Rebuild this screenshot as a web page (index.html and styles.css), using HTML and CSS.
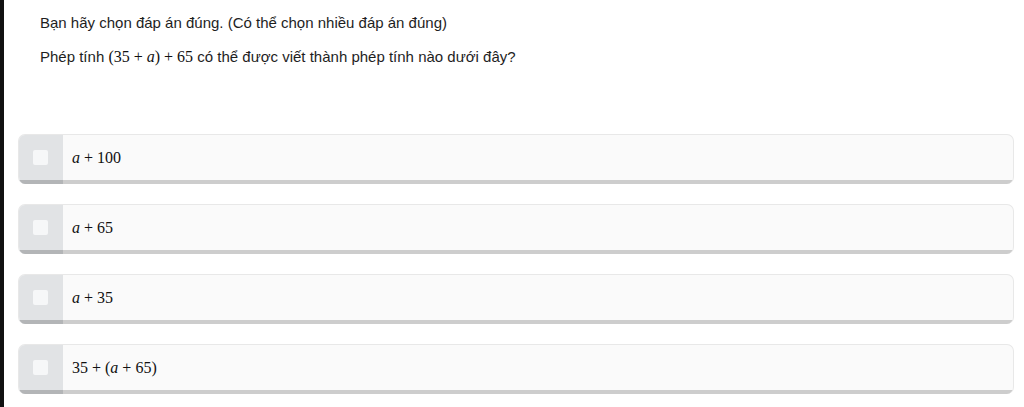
FILE: index.html
```html
<!DOCTYPE html>
<html lang="vi">
<head>
<meta charset="utf-8">
<title>Câu hỏi</title>
<link rel="stylesheet" href="styles.css">
</head>
<body>
<div class="page">
  <div class="question">
    <p class="instr">Bạn hãy chọn đáp án đúng. (Có thể chọn nhiều đáp án đúng)</p>
    <p class="prompt">Phép tính <span class="math">(35 + <i>a</i>) + 65</span> có thể được viết thành phép tính nào dưới đây?</p>
  </div>
  <div class="options">
    <div class="option">
      <div class="check"><span class="box"></span></div>
      <div class="label"><span class="math"><i>a</i> + 100</span></div>
    </div>
    <div class="option">
      <div class="check"><span class="box"></span></div>
      <div class="label"><span class="math"><i>a</i> + 65</span></div>
    </div>
    <div class="option">
      <div class="check"><span class="box"></span></div>
      <div class="label"><span class="math"><i>a</i> + 35</span></div>
    </div>
    <div class="option">
      <div class="check"><span class="box"></span></div>
      <div class="label"><span class="math">35 + (<i>a</i> + 65)</span></div>
    </div>
  </div>
</div>
</body>
</html>
```
FILE: styles.css
```css
html, body {
  margin: 0;
  padding: 0;
  background: #ffffff;
}
body {
  font-family: "Liberation Sans", Arial, sans-serif;
  color: #1e1e1e;
}
.page {
  min-height: 407px;
  box-sizing: border-box;
  border-left: 4px solid #111;
  padding: 13px 10px 0 14px;
}
.question {
  padding-left: 22px;
}
.question p {
  margin: 0;
  font-size: 15px;
  line-height: 20px;
}
.question .prompt {
  margin-top: 14px;
}
.math {
  font-family: "Liberation Serif", "Times New Roman", serif;
  font-size: 16px;
  color: #111;
}
.math i {
  font-style: italic;
}
.options {
  margin-top: 67px;
  display: flex;
  flex-direction: column;
  gap: 20px;
}
.option {
  display: flex;
  height: 50px;
  box-sizing: border-box;
  border-radius: 7px;
  border: 1px solid #e8e8e8;
  border-bottom: none;
  background: #fafafa;
  overflow: hidden;
}
.check {
  width: 44px;
  flex: none;
  background: #e1e3e5;
  border-bottom: 4px solid #b3b5b7;
  display: flex;
  align-items: center;
  justify-content: center;
}
.box {
  width: 15px;
  height: 15px;
  border-radius: 2px;
  background: #f6f7f8;
  margin-left: -2px;
}
.label {
  flex: 1;
  display: flex;
  align-items: center;
  padding-left: 9px;
  border-bottom: 4px solid #cdcdcd;
}
```
